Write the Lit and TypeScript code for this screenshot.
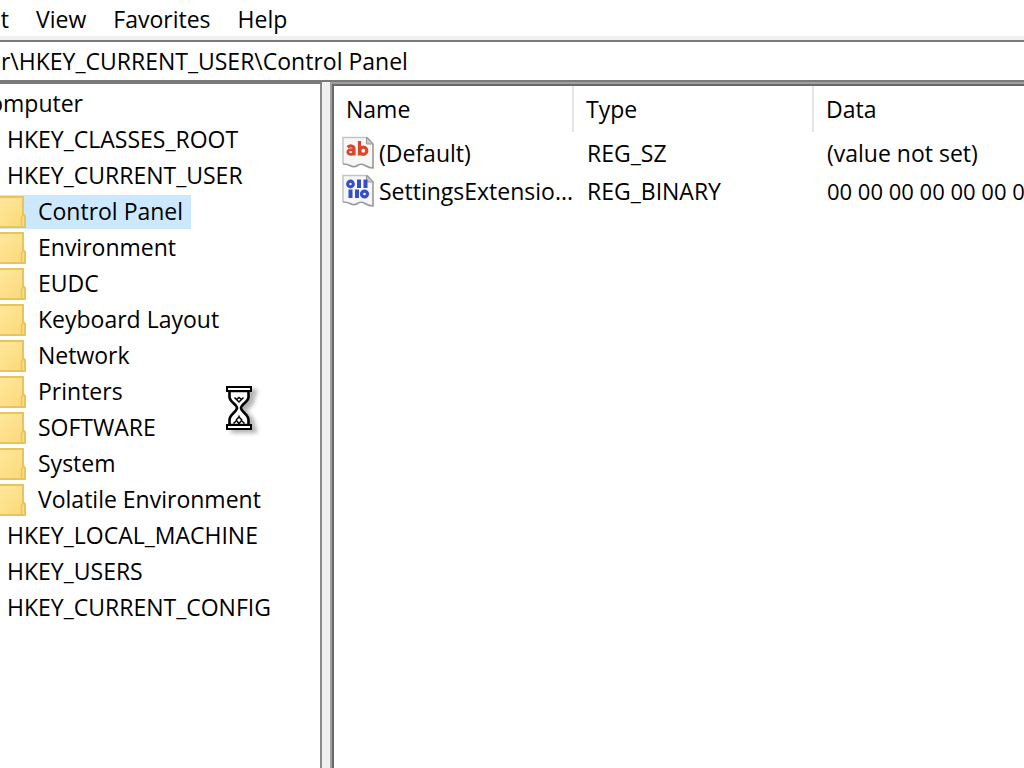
import { LitElement, html, svg, css } from "lit";
import { customElement, state } from "lit/decorators.js";
import { classMap } from "lit/directives/class-map.js";

interface Key { name: string; level: number; }
interface Value { name: string; type: string; data: string; kind: "text" | "binary"; }

const keys: Key[] = [
  { name: "Computer", level: 0 },
  { name: "HKEY_CLASSES_ROOT", level: 1 },
  { name: "HKEY_CURRENT_USER", level: 1 },
  { name: "Control Panel", level: 2 },
  { name: "Environment", level: 2 },
  { name: "EUDC", level: 2 },
  { name: "Keyboard Layout", level: 2 },
  { name: "Network", level: 2 },
  { name: "Printers", level: 2 },
  { name: "SOFTWARE", level: 2 },
  { name: "System", level: 2 },
  { name: "Volatile Environment", level: 2 },
  { name: "HKEY_LOCAL_MACHINE", level: 1 },
  { name: "HKEY_USERS", level: 1 },
  { name: "HKEY_CURRENT_CONFIG", level: 1 },
];

const values: Value[] = [
  { name: "(Default)", type: "REG_SZ", data: "(value not set)", kind: "text" },
  { name: "SettingsExtensio...", type: "REG_BINARY", data: "00 00 00 00 00 00 00", kind: "binary" },
];

const folderIcon = html`
  <svg class="folder" viewBox="0 0 26 34" aria-hidden="true">
    <defs>
      <linearGradient id="f" x1="0" y1="0" x2="1" y2="1">
        <stop offset="0" stop-color="#ffe79c" /><stop offset="1" stop-color="#fbd978" />
      </linearGradient>
    </defs>
    <path d="M-2 2H23V19L25 21V32H-2Z" fill="url(#f)" stroke="#e8c55c" stroke-width="2" />
    <path d="M21.500 32V23L23 19" fill="none" stroke="#e8c55c" stroke-width="1.500" />
  </svg>`;

const glyphs = {
  text: svg`
    <g fill="none" stroke="#d9482b" stroke-width="3.200">
      <path d="M5.500 11.200Q7.500 9.800 9.500 10Q12 10.200 12 13V19.500" />
      <ellipse cx="8.800" cy="16" rx="3" ry="2.300" stroke-width="2.800" />
      <path d="M17.500 5V19.500" />
      <ellipse cx="21.300" cy="14.700" rx="3.500" ry="3.600" />
    </g>`,
  binary: svg`
    <g fill="none" stroke="#3450c4" stroke-width="3.200">
      <ellipse cx="8.500" cy="10" rx="2.800" ry="2.800" />
      <path d="M17 5.500V14M23.500 5.500V14M8.500 15.500V24M15 15.500V24" stroke-width="4" />
      <ellipse cx="22.500" cy="20" rx="3" ry="2.800" />
    </g>`,
};

const valueIcon = (kind: Value["kind"]) => html`
  <svg class="value-icon" viewBox="0 0 32 34" aria-hidden="true">
    <path d="M1 1.500H25L31 8V32Q27 32 23 29.500Q19 27 15.500 29.500Q12 32 8 29.500Q5 28 1 28Z" fill="#f7f7f7" />
    <path d="M1 28V1.500H25" fill="none" stroke="#c4c4c4" stroke-width="1.500" />
    <path d="M25 1.500L31 8V32Q27 32 23 29.500Q19 27 15.500 29.500Q12 32 8 29.500Q5 28 1 28" fill="none" stroke="#999" stroke-width="1.600" />
    <path d="M24.500 1.500V8H31Z" fill="#c9c9c9" stroke="#999" />
    ${glyphs[kind]}
  </svg>`;

@customElement("app-root")
export class AppRoot extends LitElement {
  @state() private selected = "Control Panel";

  static styles = css`
    :host {
      display: flex;
      flex-direction: column;
      height: 100vh;
      overflow: hidden;
      background: #fff;
      color: #000;
      font: 23px/36px "Open Sans", "Noto Sans", sans-serif;
    }
    * { box-sizing: border-box; }
    button, input {
      font: inherit;
      color: inherit;
      background: none;
      border: 0;
      padding: 0;
      margin: 0;
      outline: 0;
    }
    .menu {
      display: flex;
      gap: 27px;
      height: 40px;
      border-bottom: 4px solid #f0f0f0;
    }
    .menu button { white-space: nowrap; flex: none; height: 38px; line-height: 38px; }
    .menu .cut {
      display: flex;
      justify-content: flex-end;
      overflow: hidden;
      width: 9px;
    }
    .address {
      display: flex;
      border: solid #7a7a7a;
      border-width: 2px 0;
      height: 42px;
      overflow: hidden;
    }
    .address input {
      flex: 1;
      margin-left: -98px;
      height: 38px;
    }
    .panes {
      flex: 1;
      min-height: 0;
      display: grid;
      grid-template-columns: 322px 8px 1fr;
      background: #f0f0f0;
    }
    .tree {
      background: #fff;
      border-top: 2px solid #7a7a7a;
      border-right: 2px solid #8a8a8a;
      padding-top: 2px;
      overflow: hidden;
    }
    .key {
      display: flex;
      align-items: center;
      width: max-content;
      height: 36px;
      padding: 0 0 2px 7px;
      white-space: nowrap;
    }
    .key.root { width: 83px; padding-left: 0; justify-content: flex-end; }
    .key.child { padding: 0; }
    .folder { width: 26px; height: 34px; flex: none; }
    .label { padding: 0 8px 0 12px; height: 34px; line-height: 32px; }
    .key.selected { background: linear-gradient(#cce8ff, #cce8ff) center / 100% 34px no-repeat; }
    .values {
      background: #fff;
      border: solid #a0a0a0;
      border-width: 2px 0 0 2px;
      overflow: hidden;
    }
    .frame {
      height: 100%;
      border: solid #696969;
      border-width: 2px 0 0 2px;
    }
    table {
      width: 100%;
      table-layout: fixed;
      border-collapse: collapse;
    }
    .col { width: 240px; }
    th {
      font-weight: 400;
      text-align: left;
      padding: 0;
      height: 48px;
      vertical-align: top;
    }
    .head {
      display: block;
      padding-left: 12px;
      height: 46px;
      line-height: 46px;
      border-right: 2px solid #e5e5e5;
    }
    .head.last { border: 0; }
    td {
      height: 38px;
      padding: 0 0 0 13px;
      white-space: nowrap;
      overflow: hidden;
      line-height: 38px;
    }
    .name { padding: 0; }
    .name-cell { display: flex; align-items: center; gap: 5px; padding-left: 8px; }
    .binary { font-size: 22px; }
    .value-icon { width: 32px; height: 34px; flex: none; }
    .busy {
      position: absolute;
      left: 222px;
      top: 382px;
      width: 40px;
      height: 56px;
      pointer-events: none;
      filter: drop-shadow(5px 3px 2px rgba(0, 0, 0, 0.3));
    }
  `;

  private renderKey(key: Key) {
    const selected = key.name === this.selected;
    const classes = { key: true, root: key.level === 0, child: key.level === 2, selected };
    return html`
      <button class=${classMap(classes)} role="treeitem" aria-selected=${selected}
        @click=${() => (this.selected = key.name)}>
        ${key.level === 2 ? html`${folderIcon}<span class="label">${key.name}</span>` : key.name}
      </button>`;
  }

  render() {
    return html`
      <nav class="menu" aria-label="Menu bar">
        <button class="cut">Edit</button>
        <button>View</button>
        <button>Favorites</button>
        <button>Help</button>
      </nav>
      <div class="address">
        <input aria-label="Address" value="Computer\\HKEY_CURRENT_USER\\Control Panel" />
      </div>
      <main class="panes">
        <div class="tree" role="tree" aria-label="Keys">${keys.map((key) => this.renderKey(key))}</div>
        <div></div>
        <section class="values">
          <div class="frame">
            <table>
              <colgroup><col class="col" /><col class="col" /><col /></colgroup>
              <thead>
                <tr>
                  <th><span class="head">Name</span></th>
                  <th><span class="head">Type</span></th>
                  <th><span class="head last">Data</span></th>
                </tr>
              </thead>
              <tbody>
                ${values.map((v) => html`
                  <tr>
                    <td class="name"><div class="name-cell">${valueIcon(v.kind)}<span>${v.name}</span></div></td>
                    <td>${v.type}</td>
                    <td class=${v.kind}>${v.data}</td>
                  </tr>`)}
              </tbody>
            </table>
          </div>
        </section>
      </main>
      <svg class="busy" viewBox="0 0 40 56" aria-hidden="true">
        <path d="M7.500 9V15C7.500 20 15 22 15 26C15 30 7.500 32 7.500 38V43H26.500V38C26.500 32 19 30 19 26C19 22 26.500 20 26.500 15V9Z" fill="#fff" stroke="#000" stroke-width="2.600" />
        <path d="M5 5H29V9H5ZM5 43H29V47H5Z" fill="#fff" stroke="#000" stroke-width="2" />
        <path d="M12.500 15.500L14.500 17.500L17 15.500L19.500 17.500L21.500 15.500M14.500 17.500L17 20L19.500 17.500M17 33.500V36M11.500 41.500L14.500 38.500L17 41.500L19.500 38.500L22.500 41.500M14 38L17 35L20 38" fill="none" stroke="#000" stroke-width="1.500" />
      </svg>`;
  }
}
